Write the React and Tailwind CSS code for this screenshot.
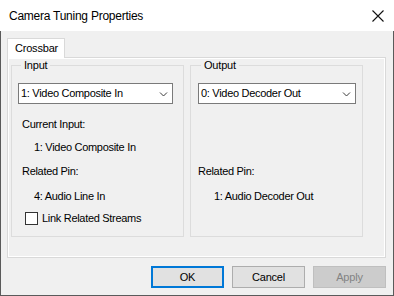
import React from 'react';

const font = { fontFamily: '"Liberation Sans", Arial, sans-serif' };

function Chevron() {
  return (
    <svg width="9" height="6" viewBox="0 0 9 6" fill="none">
      <path d="M1 1.5 L4.5 5 L8 1.5" stroke="#3c3c3c" strokeWidth="1" />
    </svg>
  );
}

function Combo({ value, width }) {
  return (
    <div className={`flex h-[21px] items-center justify-between border border-[#7a7a7a] bg-white pl-[2px] pr-[4px] ${width}`}>
      <span className="text-[11px] tracking-[-0.3px] text-black">{value}</span>
      <Chevron />
    </div>
  );
}

function Btn({ children, variant }) {
  const cls =
    variant === 'default'
      ? 'border-2 border-[#0078d7] bg-[#e1e1e1] text-black'
      : variant === 'disabled'
      ? 'border border-[#bfbfbf] bg-[#cccccc] text-[#838383]'
      : 'border border-[#adadad] bg-[#e1e1e1] text-black';
  return (
    <div className={`flex h-[22px] w-[73px] items-center justify-center text-[11px] tracking-[-0.2px] ${cls}`}>
      {children}
    </div>
  );
}

export default function App() {
  return (
    <div className="flex h-[296px] w-[394px] flex-col bg-white" style={font}>
      {/* Title bar */}
      <div className="flex h-[31px] items-center justify-between pl-[9px] pr-[10px]">
        <span className="text-[12px] tracking-[-0.25px] text-black">Camera Tuning Properties</span>
        <svg width="12" height="12" viewBox="0 0 12 12" fill="none">
          <path d="M0.5 0.5 L11.5 11.5 M11.5 0.5 L0.5 11.5" stroke="#111" strokeWidth="1.1" />
        </svg>
      </div>

      {/* Body */}
      <div className="flex flex-1 flex-col border-x border-b border-[#5a5a5a] bg-[#f0f0f0] pl-[6px] pr-[7px] pt-[7px]">
        {/* Tab header */}
        <div className="relative z-10 -mb-px flex h-[20px] w-[58px] items-center border border-b-0 border-[#d9d9d9] bg-white pl-[7px]">
          <span className="text-[11px] tracking-[-0.2px] text-black">Crossbar</span>
        </div>

        {/* Tab panel */}
        <div className="h-[201px] w-[379px] border border-[#d9d9d9]">
          <div className="flex h-full gap-[6px] border border-white pl-[2px] pt-0">
            {/* Input group */}
            <fieldset className="h-[178px] w-[173px] border border-[#dcdcdc] pl-[6px]">
              <legend className="ml-[3px] px-[3px] text-[11px] leading-[13px] tracking-[-0.2px] text-black">Input</legend>
              <div className="mt-[11px]">
                <Combo value="1: Video Composite In" width="w-[155px]" />
              </div>
              <div className="mt-[14px] pl-[4px] text-[11px] leading-[13px] tracking-[-0.3px] text-black">Current Input:</div>
              <div className="mt-[10px] pl-[16px] text-[11px] leading-[13px] tracking-[-0.3px] text-black">1: Video Composite In</div>
              <div className="mt-[11px] pl-[4px] text-[11px] leading-[13px] tracking-[-0.3px] text-black">Related Pin:</div>
              <div className="mt-[12px] pl-[16px] text-[11px] leading-[13px] tracking-[-0.3px] text-black">4: Audio Line In</div>
              <div className="mt-[9px] flex items-center gap-[4px] pl-[7px]">
                <div className="h-[13px] w-[13px] border border-[#333333] bg-white" />
                <span className="text-[11px] leading-[13px] tracking-[-0.3px] text-black">Link Related Streams</span>
              </div>
            </fieldset>

            {/* Output group */}
            <fieldset className="h-[178px] w-[173px] border border-[#dcdcdc] pl-[7px]">
              <legend className="ml-[3px] px-[3px] text-[11px] leading-[13px] tracking-[-0.2px] text-black">Output</legend>
              <div className="mt-[11px]">
                <Combo value="0: Video Decoder Out" width="w-[158px]" />
              </div>
              <div className="mt-[61px] text-[11px] leading-[13px] tracking-[-0.3px] text-black">Related Pin:</div>
              <div className="mt-[12px] pl-[16px] text-[11px] leading-[13px] tracking-[-0.3px] text-black">1: Audio Decoder Out</div>
            </fieldset>
          </div>
        </div>

        {/* Buttons */}
        <div className="mt-[8px] flex justify-end gap-[8px] pr-0">
          <Btn variant="default">OK</Btn>
          <Btn>Cancel</Btn>
          <Btn variant="disabled">Apply</Btn>
        </div>
      </div>
    </div>
  );
}
